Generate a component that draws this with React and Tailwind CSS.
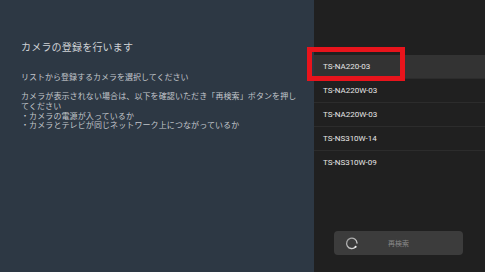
export default function App() {
  const rows = ["TS-NA220-03", "TS-NA220W-03", "TS-NA220W-03", "TS-NS310W-14", "TS-NS310W-09"];
  return (
    <div className="relative flex w-[485px] h-[272px] overflow-hidden" style={{ fontFamily: '"Noto Sans CJK JP", "Noto Sans", sans-serif' }}>
      <div className="w-[314px] h-full bg-[#2d3844] pl-[21px] pt-[39px] text-[#cfd2d6]">
        <div className="text-[10px] leading-[16px] tracking-[0.2px]">カメラの登録を行います</div>
        <div className="mt-[17px] text-[8px] leading-[10px] text-[#c2c6cb]">リストから登録するカメラを選択してください</div>
        <div className="mt-[9px] text-[8px] leading-[9.8px] text-[#c2c6cb] tracking-[0.1px]">
          <div>カメラが表示されない場合は、以下を確認いただき「再検索」ボタンを押し</div>
          <div>てください</div>
          <div>・カメラの電源が入っているか</div>
          <div>・カメラとテレビが同じネットワーク上につながっているか</div>
        </div>
      </div>
      <div className="flex-1 h-full bg-[#202020] flex flex-col">
        <div className="pt-[55px] flex flex-col" style={{ fontFamily: 'Roboto, "Liberation Sans", sans-serif' }}>
          {rows.map((r, i) => (
            <div key={i} className={`h-[24px] flex items-center pl-[9px] text-[8px] text-[#e6e6e6] ${i === 0 ? "bg-[#333333]" : ""} ${i < 4 ? "border-b border-[#2c2c2c]" : ""}`}>
              {r}
            </div>
          ))}
        </div>
        <div className="mt-auto mb-[17px] ml-[20px] w-[129px] h-[24px] rounded-[4px] bg-[#3c3c3c] flex items-center relative">
          <svg width="14" height="14" viewBox="0 0 14 14" className="absolute left-[11px] top-[5px]">
            <defs>
              <linearGradient id="g" x1="0" y1="0" x2="1" y2="1">
                <stop offset="0" stopColor="#9a9a9a" />
                <stop offset="1" stopColor="#e0e0e0" />
              </linearGradient>
            </defs>
            <path d="M10.5 11 A5.2 5.2 0 1 1 12 7" fill="none" stroke="url(#g)" strokeWidth="1.3" strokeLinecap="round" />
            <circle cx="10.6" cy="10.8" r="1" fill="#f0f0f0" />
          </svg>
          <span className="w-full text-center text-[7px] text-[#8a8a8a]">再検索</span>
        </div>
      </div>
      <div className="absolute left-[307px] top-[47px] w-[98px] h-[34px] border-[5px] border-[#e8141c]" />
    </div>
  );
}
